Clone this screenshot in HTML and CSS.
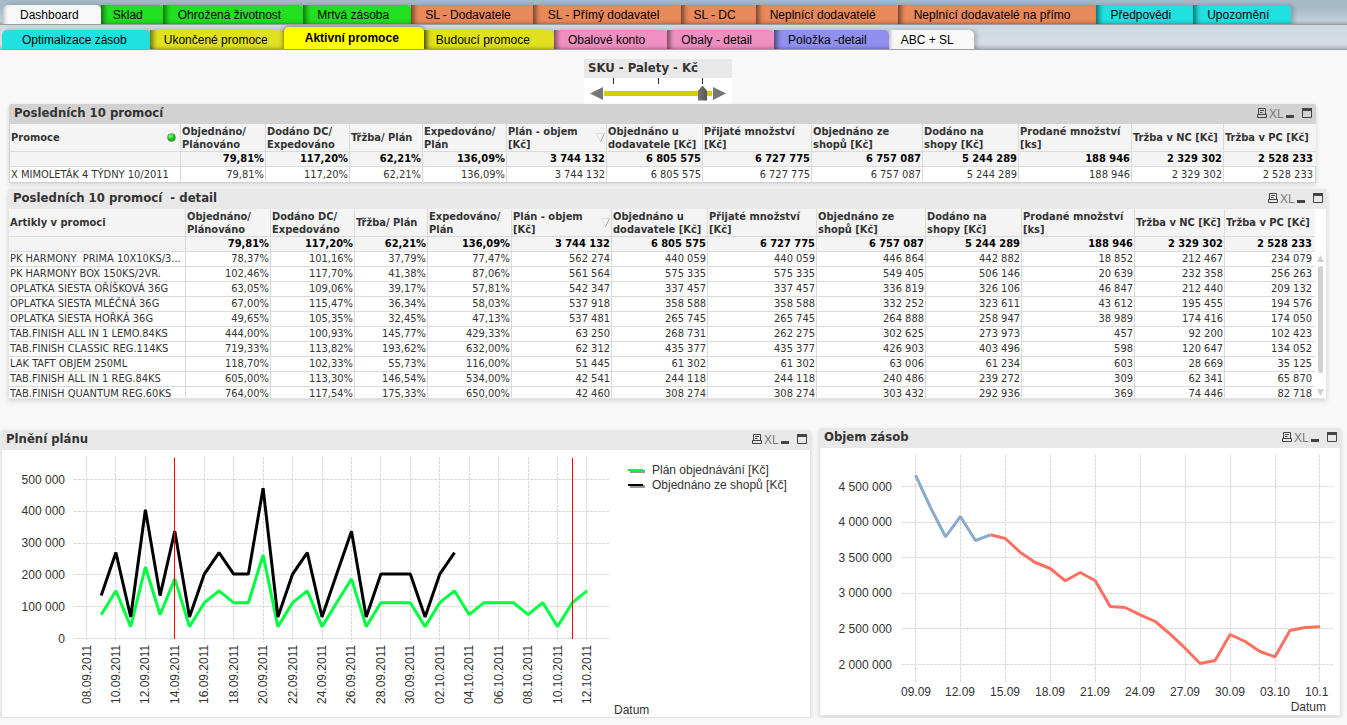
FILE: index.html
```html
<!DOCTYPE html>
<html lang="cs">
<head>
<meta charset="utf-8">
<title>Aktivní promoce</title>
<link rel="stylesheet" href="styles.css">
</head>
<body>
<svg class="defs" aria-hidden="true">
  <symbol id="i-print" viewBox="0 0 10 10"><path d="M1.5 6.5V.5h7v6M3 2.5h4M3 4.5h2.500M.5 6.500h9v3h-9z" fill="none" stroke="#444"/></symbol>
  <symbol id="i-min" viewBox="0 0 8 10"><path d="M0 7h8v3H0z" fill="#444"/></symbol>
  <symbol id="i-max" viewBox="0 0 10 10"><path d="M.5 .5h9v9h-9z" fill="none" stroke="#444"/><path d="M0 0h10v3H0z" fill="#444"/></symbol>
</svg>

<header class="tabs">
  <nav class="row row-top">
    <a class="tab light first" href="#">Dashboard</a>
    <a class="tab green s" href="#">Sklad</a>
    <a class="tab green l" href="#">Ohrožená životnost</a>
    <a class="tab green" href="#">Mrtvá zásoba</a>
    <a class="tab orange" href="#">SL - Dodavatele</a>
    <a class="tab orange l" href="#">SL - Přímý dodavatel</a>
    <a class="tab orange s" href="#">SL - DC</a>
    <a class="tab orange" href="#">Neplnící dodavatelé</a>
    <a class="tab orange xl-pad" href="#">Neplnící dodavatelé na přímo</a>
    <a class="tab cyan" href="#">Předpovědi</a>
    <a class="tab cyan" href="#">Upozornění</a>
  </nav>
  <nav class="row row-bottom">
    <a class="tab cyan first" href="#">Optimalizace zásob</a>
    <a class="tab olive even" href="#">Ukončené promoce</a>
    <a class="tab active" href="#" aria-current="page">Aktivní promoce</a>
    <a class="tab olive after-active" href="#">Budoucí promoce</a>
    <a class="tab pink" href="#">Obalové konto</a>
    <a class="tab pink" href="#">Obaly - detail</a>
    <a class="tab violet" href="#">Položka -detail</a>
    <a class="tab light s" href="#">ABC + SL</a>
  </nav>
</header>

<main>
  <section class="unit">
    <label class="unit-title" for="unit">SKU - Palety - Kč</label>
    <div class="unit-body">
      <button class="arrow" aria-label="Předchozí"><svg width="13" height="13" viewBox="0 0 13 13"><path d="M0 6.500 13 0v13z" fill="#777"/></svg></button>
      <div class="rail">
        <div class="ticks"><i></i><i></i><i></i></div>
        <div class="track"><input id="unit" type="range" min="0" max="2" value="2"></div>
      </div>
      <button class="arrow" aria-label="Další"><svg width="13" height="13" viewBox="0 0 13 13"><path d="M13 6.500 0 0v13z" fill="#777"/></svg></button>
    </div>
  </section>

  <section class="panel summary">
    <div class="bar dark"><h2>Posledních 10 promocí</h2><div class="tools"><button aria-label="Tisk"><svg width="10" height="10"><use href="#i-print"/></svg></button><button class="xl">XL</button><button aria-label="Minimalizovat"><svg width="8" height="10"><use href="#i-min"/></svg></button><button class="max" aria-label="Maximalizovat"><svg width="10" height="10"><use href="#i-max"/></svg></button></div></div>
    <table>
      <colgroup><col class="w171"><col class="w85"><col class="w84"><col class="w73"><col class="w84"><col class="w100"><col class="w96"><col class="w109"><col class="w111"><col class="w96"><col class="w113"><col class="w92"><col class="w92"></colgroup>
      <thead>
        <tr><th><div class="sel">Promoce<span class="led"></span></div></th><th>Objednáno/<br>Plánováno</th><th>Dodáno DC/<br>Expedováno</th><th>Třžba/ Plán</th><th>Expedováno/<br>Plán</th><th><div class="sel"><span>Plán - objem<br>[Kč]</span><svg class="sort" width="9" height="9" viewBox="0 0 9 9"><path d="M.5.5h8L4.500 8.500z" fill="#fafafa" stroke="#ddd"/><path d="M8.500.5 4.500 8.500" stroke="#aaa"/></svg></div></th><th>Objednáno u<br>dodavatele [Kč]</th><th>Přijaté množství<br>[Kč]</th><th>Objednáno ze<br>shopů [Kč]</th><th>Dodáno na<br>shopy [Kč]</th><th>Prodané množství<br>[ks]</th><th>Tržba v NC [Kč]</th><th>Tržba v PC [Kč]</th></tr>
        <tr class="total"><td></td><td>79,81%</td><td>117,20%</td><td>62,21%</td><td>136,09%</td><td>3 744 132</td><td>6 805 575</td><td>6 727 775</td><td>6 757 087</td><td>5 244 289</td><td>188 946</td><td>2 329 302</td><td>2 528 233</td></tr>
      </thead>
      <tbody>
        <tr><td>X MIMOLETÁK 4 TÝDNY 10/2011</td><td>79,81%</td><td>117,20%</td><td>62,21%</td><td>136,09%</td><td>3 744 132</td><td>6 805 575</td><td>6 727 775</td><td>6 757 087</td><td>5 244 289</td><td>188 946</td><td>2 329 302</td><td>2 528 233</td></tr>
      </tbody>
    </table>
  </section>

  <section class="panel detail">
    <div class="bar"><h2>Posledních 10 promocí &nbsp;- detail</h2><div class="tools"><button aria-label="Tisk"><svg width="10" height="10"><use href="#i-print"/></svg></button><button class="xl">XL</button><button aria-label="Minimalizovat"><svg width="8" height="10"><use href="#i-min"/></svg></button><button class="max" aria-label="Maximalizovat"><svg width="10" height="10"><use href="#i-max"/></svg></button></div></div>
    <div class="scroller">
    <table>
      <colgroup><col class="w177"><col class="w85"><col class="w84"><col class="w73"><col class="w84"><col class="w100"><col class="w96"><col class="w109"><col class="w109"><col class="w96"><col class="w113"><col class="w90"><col class="w90"></colgroup>
      <thead>
        <tr><th>Artikly v promoci</th><th>Objednáno/<br>Plánováno</th><th>Dodáno DC/<br>Expedováno</th><th>Třžba/ Plán</th><th>Expedováno/<br>Plán</th><th><div class="sel"><span>Plán - objem<br>[Kč]</span><svg class="sort" width="9" height="9" viewBox="0 0 9 9"><path d="M.5.5h8L4.500 8.500z" fill="#fafafa" stroke="#ddd"/><path d="M8.500.5 4.500 8.500" stroke="#aaa"/></svg></div></th><th>Objednáno u<br>dodavatele [Kč]</th><th>Přijaté množství<br>[Kč]</th><th>Objednáno ze<br>shopů [Kč]</th><th>Dodáno na<br>shopy [Kč]</th><th>Prodané množství<br>[ks]</th><th>Tržba v NC [Kč]</th><th>Tržba v PC [Kč]</th></tr>
        <tr class="total"><td></td><td>79,81%</td><td>117,20%</td><td>62,21%</td><td>136,09%</td><td>3 744 132</td><td>6 805 575</td><td>6 727 775</td><td>6 757 087</td><td>5 244 289</td><td>188 946</td><td>2 329 302</td><td>2 528 233</td></tr>
      </thead>
      <tbody>
        <tr><td>PK HARMONY &nbsp;PRIMA 10X10KS/3...</td><td>78,37%</td><td>101,16%</td><td>37,79%</td><td>77,47%</td><td>562 274</td><td>440 059</td><td>440 059</td><td>446 864</td><td>442 882</td><td>18 852</td><td>212 467</td><td>234 079</td></tr>
        <tr><td>PK HARMONY BOX 150KS/2VR.</td><td>102,46%</td><td>117,70%</td><td>41,38%</td><td>87,06%</td><td>561 564</td><td>575 335</td><td>575 335</td><td>549 405</td><td>506 146</td><td>20 639</td><td>232 358</td><td>256 263</td></tr>
        <tr><td>OPLATKA SIESTA OŘÍŠKOVÁ 36G</td><td>63,05%</td><td>109,06%</td><td>39,17%</td><td>57,81%</td><td>542 347</td><td>337 457</td><td>337 457</td><td>336 819</td><td>326 106</td><td>46 847</td><td>212 440</td><td>209 132</td></tr>
        <tr><td>OPLATKA SIESTA MLÉČNÁ 36G</td><td>67,00%</td><td>115,47%</td><td>36,34%</td><td>58,03%</td><td>537 918</td><td>358 588</td><td>358 588</td><td>332 252</td><td>323 611</td><td>43 612</td><td>195 455</td><td>194 576</td></tr>
        <tr><td>OPLATKA SIESTA HOŘKÁ 36G</td><td>49,65%</td><td>105,35%</td><td>32,45%</td><td>47,13%</td><td>537 481</td><td>265 745</td><td>265 745</td><td>264 888</td><td>258 947</td><td>38 989</td><td>174 416</td><td>174 050</td></tr>
        <tr><td>TAB.FINISH ALL IN 1 LEMO.84KS</td><td>444,00%</td><td>100,93%</td><td>145,77%</td><td>429,33%</td><td>63 250</td><td>268 731</td><td>262 275</td><td>302 625</td><td>273 973</td><td>457</td><td>92 200</td><td>102 423</td></tr>
        <tr><td>TAB.FINISH CLASSIC REG.114KS</td><td>719,33%</td><td>113,82%</td><td>193,62%</td><td>632,00%</td><td>62 312</td><td>435 377</td><td>435 377</td><td>426 903</td><td>403 496</td><td>598</td><td>120 647</td><td>134 052</td></tr>
        <tr><td>LAK TAFT OBJEM 250ML</td><td>118,70%</td><td>102,33%</td><td>55,73%</td><td>116,00%</td><td>51 445</td><td>61 302</td><td>61 302</td><td>63 006</td><td>61 234</td><td>603</td><td>28 669</td><td>35 125</td></tr>
        <tr><td>TAB.FINISH ALL IN 1 REG.84KS</td><td>605,00%</td><td>113,30%</td><td>146,54%</td><td>534,00%</td><td>42 541</td><td>244 118</td><td>244 118</td><td>240 486</td><td>239 272</td><td>309</td><td>62 341</td><td>65 870</td></tr>
        <tr><td>TAB.FINISH QUANTUM REG.60KS</td><td>764,00%</td><td>117,54%</td><td>175,33%</td><td>650,00%</td><td>42 460</td><td>308 274</td><td>308 274</td><td>303 432</td><td>292 936</td><td>369</td><td>74 446</td><td>82 718</td></tr>
      </tbody>
    </table>
    <div class="scrollbar" aria-hidden="true">
      <svg width="7" height="7" viewBox="0 0 7 7"><path d="M3.500 0 7 7H0z" fill="#d0d0d0"/></svg>
      <span class="grip"></span>
      <svg width="7" height="7" viewBox="0 0 7 7"><path d="M0 0h7L3.500 7z" fill="#d0d0d0"/></svg>
    </div>
    </div>
  </section>

  <div class="charts">
    <section class="panel plan">
      <div class="bar"><h2>Plnění plánu</h2><div class="tools"><button aria-label="Tisk"><svg width="10" height="10"><use href="#i-print"/></svg></button><button class="xl">XL</button><button aria-label="Minimalizovat"><svg width="8" height="10"><use href="#i-min"/></svg></button><button class="max" aria-label="Maximalizovat"><svg width="10" height="10"><use href="#i-max"/></svg></button></div></div>
      <svg class="chart" id="plan" viewBox="0 0 808 267" role="img" aria-label="Plnění plánu"></svg>
    </section>
    <section class="panel stock">
      <div class="bar"><h2>Objem zásob</h2><div class="tools"><button aria-label="Tisk"><svg width="10" height="10"><use href="#i-print"/></svg></button><button class="xl">XL</button><button aria-label="Minimalizovat"><svg width="8" height="10"><use href="#i-min"/></svg></button><button class="max" aria-label="Maximalizovat"><svg width="10" height="10"><use href="#i-max"/></svg></button></div></div>
      <svg class="chart" id="stock" viewBox="0 0 520 267" role="img" aria-label="Objem zásob"></svg>
    </section>
  </div>
</main>
<script src="charts.js"></script>
</body>
</html>
```

FILE: styles.css
```css
* { box-sizing: border-box; }

body {
  margin: 0;
  background: #f8f8f8;
  color: #333;
  font-family: "DejaVu Sans Condensed", Tahoma, sans-serif;
  font-size: 11px;
}

button {
  display: flex;
  margin: 0;
  padding: 0;
  border: 0;
  background: none;
  color: #777;
}

.defs { display: none; }

/* Tabs */
.row {
  display: flex;
  align-items: flex-end;
  height: 25px;
  overflow: hidden;
  border-bottom: 1px solid #999da0;
  font-family: "Liberation Sans", Arial, sans-serif;
  font-size: 12px;
}
.row-top { padding-left: 3px; background: linear-gradient(#a6b9c6 30%, #c2cfd8 85%, #a4adb4); }
.row-bottom { padding-left: 2px; background: linear-gradient(#cdd8df, #d6dee5 80%, #adb3b8); }

.tab {
  position: relative;
  flex: none;
  height: 20px;
  margin-bottom: -1px;
  padding: 0 22px 0 14px;
  border-radius: 0 5px 0 0;
  line-height: 20px;
  color: #000;
  text-decoration: none;
  white-space: nowrap;
  box-shadow: inset 7px 0 5px -4px rgba(0, 0, 0, .5), inset 0 -5px 4px -4px rgba(0, 0, 0, .4), 3px 0 4px rgba(0, 0, 0, .2);
}
.tab.s { padding: 0 20px 0 12px; }
.tab.l { padding: 0 22px 0 15px; }
.tab.xl-pad { padding: 0 26px 0 16px; }
.tab.even { padding: 0 16px 0 14px; }
.tab.after-active { padding: 0 24px 0 12px; }
.tab.first {
  padding: 0 22px 0 17px;
  border-radius: 5px 5px 0 0;
  box-shadow: 3px 0 4px rgba(0, 0, 0, .2);
}
.row-bottom .first { padding: 0 23px 0 20px; }
.light { background: #f8f8f8; }
.tab.light { box-shadow: inset 5px 0 4px -4px rgba(0, 0, 0, .3), 3px 0 4px rgba(0, 0, 0, .2); }
.green { background: #20e020; }
.orange { background: #e8895a; }
.cyan { background: #20e0e0; }
.olive { background: #e0e020; }
.pink { background: #f090c0; }
.violet { background: #9090f0; }
.tab.active {
  height: 23px;
  padding: 0 25px 0 21px;
  border-radius: 5px 5px 0 0;
  background: #ff0;
  font-weight: bold;
  line-height: 23px;
  box-shadow: 0 0 5px rgba(0, 0, 0, .6);
  z-index: 1;
}

/* Unit slider */
.unit {
  width: 148px;
  margin: 9px 615px 0 auto;
  background: #fff;
}
.unit-title {
  display: block;
  height: 19px;
  padding-left: 4px;
  background: #e8e8e8;
  font-size: 13px;
  font-weight: bold;
  line-height: 18px;
}
.unit-body {
  display: flex;
  align-items: flex-end;
  height: 26px;
  padding: 0 4px 2px 6px;
}
.rail { width: 108px; margin: 0 1px; }
.ticks {
  display: flex;
  justify-content: space-between;
  height: 6px;
  padding: 0 9px;
}
.ticks i { width: 1px; background: #333; }
.track {
  display: flex;
  align-items: center;
  height: 18px;
  padding: 0 5px;
  background: linear-gradient(#d4d000, #d4d000) center / 100% 5px no-repeat;
}
.track input {
  width: 100%;
  height: 15px;
  margin: 0;
  appearance: none;
  background: none;
}
.track input::-webkit-slider-thumb {
  appearance: none;
  width: 9px;
  height: 15px;
  background: linear-gradient(90deg, #777, #555);
  clip-path: polygon(50% 0, 100% 35%, 100% 100%, 0 100%, 0 35%);
}
.arrow { margin-bottom: 2px; }

/* Panels */
.panel {
  border: solid #e4e4e4;
  border-width: 0 1px 1px;
  border-radius: 3px 3px 2px 2px;
  background: #fff;
  box-shadow: 0 2px 5px rgba(0, 0, 0, .14);
}
.bar {
  display: flex;
  align-items: center;
  justify-content: space-between;
  height: 20px;
  margin: 0 -1px;
  padding: 0 4px 2px 5px;
  border-radius: 2px 2px 0 0;
  background: #e8e8e8;
}
.bar.dark { background: #d2d2d2; }
.bar h2 {
  margin: 0;
  font-size: 13px;
  font-weight: bold;
  line-height: 18px;
}
.tools { display: flex; align-items: center; gap: 4px; }
.tools .max { margin-left: 4px; }
.xl {
  justify-content: center;
  width: 11px;
  font: 13px/12px "Liberation Sans Narrow", "Open Sans", sans-serif;
}
.summary { margin: 0 31px 0 9px; border-color: #d0d0d0; }
.detail { margin: 6px 20px 0 8px; }

/* Tables */
table {
  width: 100%;
  table-layout: fixed;
  border-collapse: separate;
  border-spacing: 0;
}
th, td {
  padding: 0 1px;
  border: solid #dadada;
  border-width: 0 1px 1px 0;
  overflow: hidden;
  white-space: nowrap;
}
th:last-child, td:last-child { border-right: 0; }
th {
  height: 28px;
  background: #f4f4f4;
  font-weight: bold;
  line-height: 13px;
  text-align: left;
}
td {
  height: 15px;
  line-height: 14px;
  text-align: right;
}
td:first-child { text-align: left; }
td:last-child { padding-right: 3px; }
.total td { background: #f4f4f4; color: #000; font-weight: bold; }
.summary tbody td { border-bottom: 0; }
.sel { display: flex; align-items: center; justify-content: space-between; }
.led {
  width: 9px;
  height: 9px;
  margin-right: 3px;
  border: 1px solid #6a9a6a;
  border-radius: 50%;
  background: radial-gradient(circle at 35% 30%, #9f9, #0c0 50%, #090);
}
.w171 { width: 171px; }
.w177 { width: 177px; }
.w73 { width: 73px; }
.w84 { width: 84px; }
.w85 { width: 85px; }
.w90 { width: 90px; }
.w92 { width: 92px; }
.w96 { width: 96px; }
.w100 { width: 100px; }
.w109 { width: 109px; }
.w111 { width: 111px; }
.w113 { width: 113px; }

.scroller { display: flex; height: 189px; overflow: hidden; }
.scroller table { flex: 1; min-width: 0; align-self: flex-start; }
.scrollbar {
  display: flex;
  flex-direction: column;
  align-items: center;
  gap: 4px;
  width: 12px;
  padding: 46px 0 2px;
}
.grip { flex: 1; width: 5px; margin-bottom: 12px; border-radius: 3px; background: #d0d0d0; }

/* Charts */
.charts {
  display: grid;
  grid-template-columns: 810fr 522fr;
  align-items: start;
  gap: 8px;
  margin: 29px 6px 0 1px;
}
.plan { margin-top: 2px; }
.chart {
  display: block;
  width: 100%;
  height: auto;
  font-family: "Liberation Sans", Arial, sans-serif;
  font-size: 12px;
  fill: #333;
}
.chart .grid { stroke: #d8d8d8; stroke-dasharray: 3 1; fill: none; }
.chart .limit { stroke: #f00; }
.chart .line { fill: none; stroke-width: 3; stroke-linejoin: bevel; }
```

FILE: charts.js
```js
const NS = 'http://www.w3.org/2000/svg';

function add(svg, name, attrs, text) {
  const el = document.createElementNS(NS, name);
  for (const key in attrs) el.setAttribute(key, attrs[key]);
  if (text) el.textContent = text;
  svg.appendChild(el);
}

const crisp = v => Math.floor(v) + 0.5;
const thousands = n => String(n).replace(/\B(?=(\d{3})+$)/g, ' ');

function hline(svg, x1, x2, y) {
  add(svg, 'path', { class: 'grid', d: `M${x1} ${crisp(y)}H${x2}` });
}
function vline(svg, x, y1, y2, cls) {
  add(svg, 'path', { class: cls, d: `M${crisp(x)} ${y1}V${y2}` });
}
function line(svg, values, color, x, y, start) {
  const points = values.map((v, i) => `${x(i + start).toFixed(1)},${y(v).toFixed(1)}`).join(' ');
  add(svg, 'polyline', { class: 'line', stroke: color, points });
}

/* Plan fulfilment: one point per day from 8 September */
{
  const svg = document.getElementById('plan');
  const x = day => 84.5 + day * 14.72;
  const y = v => 188.5 - v * 0.318;
  for (let v = 0; v <= 500; v += 100) {
    hline(svg, 72, 608, y(v));
    add(svg, 'text', { x: 63, y: Math.round(y(v)) + 4, 'text-anchor': 'end' }, thousands(v * 1000));
  }
  for (let day = 0; day <= 34; day += 2) {
    const date = new Date(2011, 8, 8 + day);
    const two = n => String(n).padStart(2, '0');
    vline(svg, x(day), 7, 192, 'grid');
    add(svg, 'text', { transform: `translate(${Math.round(x(day)) + 4} 254) rotate(-90)` },
      `${two(date.getDate())}.${two(date.getMonth() + 1)}.2011`);
  }
  const loads = [2, 4, 1, 6, 2, 5, 1, 3, 4, 3, 3, 7, 1, 3, 4, 1, 3, 5, 1, 3, 3, 3, 1, 3, 4];
  const planned = loads.concat([2, 3, 3, 3, 2, 3, 1, 3, 4]);
  line(svg, planned.map(n => n * 37.5), '#00ff40', x, y, 1);
  line(svg, loads.map(n => n * 67.5), '#000', x, y, 1);
  vline(svg, x(6), 8, 189, 'limit');
  vline(svg, x(33), 8, 189, 'limit');

  const legend = [['#00ff40', 'Plán objednávání [Kč]', 20], ['#000', 'Objednáno ze shopů [Kč]', 35]];
  for (const [color, label, top] of legend) {
    add(svg, 'rect', { x: 628, y: top, width: 15, height: 3, fill: '#999' });
    add(svg, 'rect', { x: 626, y: top - 1, width: 15, height: 2, fill: color });
    add(svg, 'text', { x: 650, y: top + 4 }, label);
  }
  add(svg, 'text', { x: 612, y: 264 }, 'Datum');
}

/* Stock volume in thousands: history, then forecast */
{
  const svg = document.getElementById('stock');
  const x = i => 95.5 + i * 14.98;
  const y = v => 38.5 + (4500 - v) * 0.0712;
  for (let v = 2000; v <= 4500; v += 500) {
    hline(svg, 82, 513, y(v));
    add(svg, 'text', { x: 72, y: Math.round(y(v)) + 4, 'text-anchor': 'end' }, thousands(v * 1000));
  }
  ['09.09', '12.09', '15.09', '18.09', '21.09', '24.09', '27.09', '30.09', '03.10', '10.1'].forEach((label, i) => {
    vline(svg, x(i * 3), 7, 234, 'grid');
    add(svg, 'text', { x: Math.round(x(i * 3)) - 15, y: 248 }, label);
  });
  const history = [4659, 4205, 3793, 4079, 3742, 3821];
  const forecast = [3821, 3770, 3573, 3433, 3348, 3175, 3292, 3175, 2815, 2801, 2698, 2604, 2426,
    2229, 2014, 2056, 2421, 2323, 2183, 2108, 2478, 2520, 2529];
  line(svg, forecast, '#ff7060', x, y, 5);
  line(svg, history, '#8caacc', x, y, 0);
  add(svg, 'text', { x: 506, y: 263, 'text-anchor': 'end' }, 'Datum');
}
```
